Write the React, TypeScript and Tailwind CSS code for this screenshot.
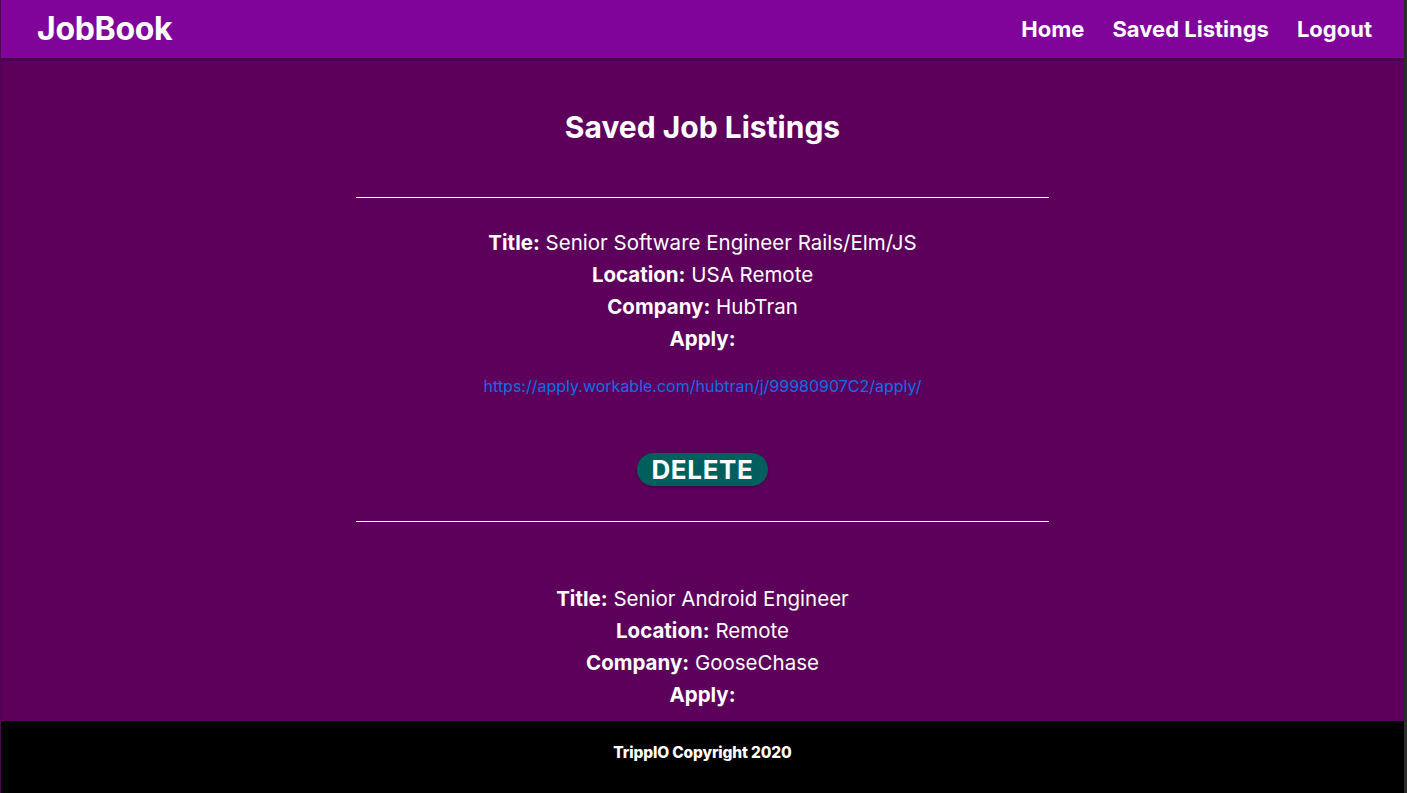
import React from "react";

type Listing = {
  title: string;
  location: string;
  company: string;
  url: string;
};

const listings: Listing[] = [
  {
    title: "Senior Software Engineer Rails/Elm/JS",
    location: "USA Remote",
    company: "HubTran",
    url: "https://apply.workable.com/hubtran/j/99980907C2/apply/",
  },
  {
    title: "Senior Android Engineer",
    location: "Remote",
    company: "GooseChase",
    url: "https://goosechase.recruitee.com/o/senior-android-engineer",
  },
];

function Field({ label, value }: { label: string; value?: string }) {
  return (
    <p className="text-[20.5px] leading-[32px] text-white">
      <span className="font-bold">{label}:</span>
      {value ? <span> {value}</span> : null}
    </p>
  );
}

function ListingCard({ job, first }: { job: Listing; first: boolean }) {
  return (
    <div className={`flex flex-col items-center ${first ? "pt-[29px]" : "pt-[61px]"}`}>
      <Field label="Title" value={job.title} />
      <Field label="Location" value={job.location} />
      <Field label="Company" value={job.company} />
      <Field label="Apply" />
      <a href={job.url} className="mt-[19px] text-[16px] leading-[24px] text-[#0a70e8]">
        {job.url}
      </a>
      <button className="mt-[55px] h-[33px] px-[14px] rounded-full bg-[#005f5c] text-white text-[26px] font-bold tracking-wide leading-none shadow-[0_1px_3px_rgba(0,0,0,0.35)]">
        DELETE
      </button>
      <hr className="mt-[35px] w-[693px] border-0 border-t border-white" />
    </div>
  );
}

export default function App() {
  return (
    <div
      className="h-[793px] flex flex-col overflow-hidden border-l border-l-[#4a0852] border-r-[3px] border-r-[#2c2c2c]"
      style={{ fontFamily: "Inter, 'Noto Sans', sans-serif" }}
    >
      {/* Navbar */}
      <nav className="relative z-10 h-[58px] shrink-0 bg-[#80049a] flex items-center justify-between pl-[36px] pr-[32px] shadow-[0_2px_3px_rgba(0,0,0,0.3)]">
        <span className="text-white text-[32px] font-bold tracking-[-0.01em]">JobBook</span>
        <div className="flex items-center gap-[28px]">
          <a className="text-white text-[22px] font-bold">Home</a>
          <a className="text-white text-[22px] font-bold">Saved Listings</a>
          <a className="text-white text-[22px] font-bold">Logout</a>
        </div>
      </nav>

      {/* Main */}
      <main className="flex-1 bg-[#5d005c] overflow-hidden flex flex-col items-center">
        <h1 className="mt-[51px] text-white text-[30px] leading-[36px] font-bold">Saved Job Listings</h1>
        <hr className="mt-[52px] w-[693px] border-0 border-t border-white" />
        {listings.map((job, i) => (
          <ListingCard key={job.url} job={job} first={i === 0} />
        ))}
      </main>

      {/* Footer */}
      <footer className="h-[72px] shrink-0 bg-black flex items-center justify-center pb-[8px]">
        <span className="text-white text-[15.5px] leading-[20px] font-extrabold tracking-[-0.01em]">TrippIO Copyright 2020</span>
      </footer>
    </div>
  );
}
